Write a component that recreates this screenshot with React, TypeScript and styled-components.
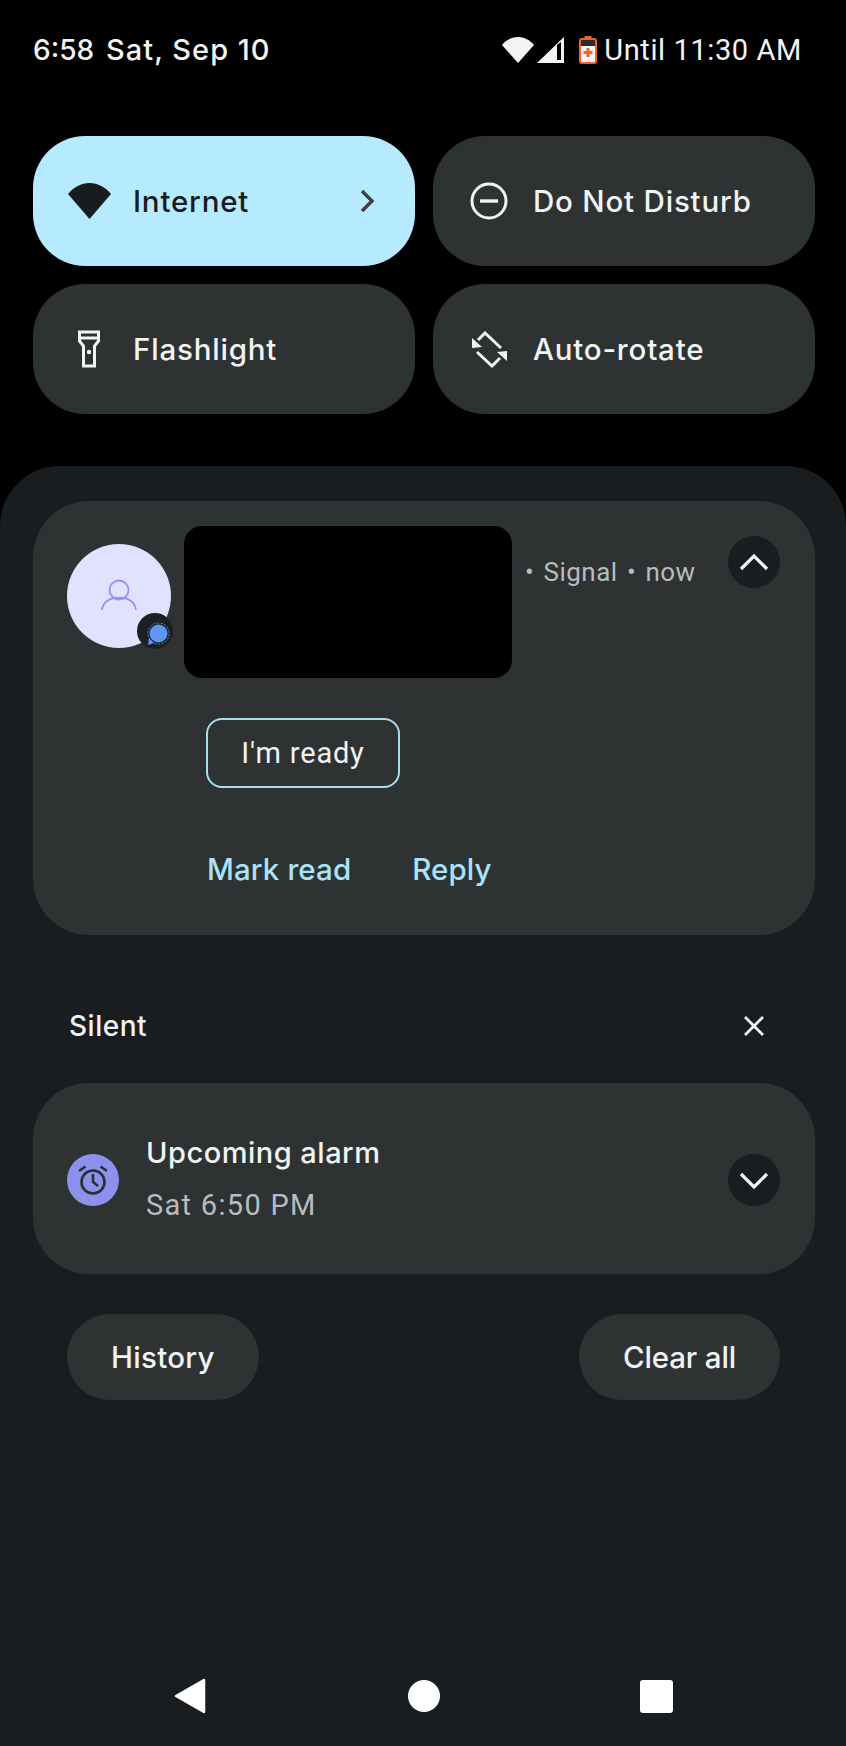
import React from "react";
import styled, { createGlobalStyle } from "styled-components";

const Global = createGlobalStyle`
  html, body { margin: 0; padding: 0; background: #000; }
  body { width: 846px; height: 1746px; overflow: hidden; font-family: Roboto, "Noto Sans", sans-serif; -webkit-font-smoothing: antialiased; }
  * { box-sizing: border-box; }
`;

const label = `font-family: Inter, Roboto, sans-serif; font-weight: 500;`;

const Screen = styled.div`
  width: 846px; height: 1746px; display: flex; flex-direction: column; background: #000; color: #f1f3f4;
`;
const StatusBar = styled.div`
  height: 100px; padding: 0 46px 0 33px; display: flex; align-items: center; justify-content: space-between;
  font-size: 29px; letter-spacing: 0.6px;
`;
const StatusLeft = styled.div`
  ${label} display: flex; gap: 12px; align-items: baseline; margin-top: -2px;
`;
const StatusTime = styled.span`font-size: 28px; letter-spacing: 0;`;
const StatusDate = styled.span`font-size: 29px; letter-spacing: 1px;`;
const StatusRight = styled.div`
  display: flex; align-items: center; font-weight: 400; margin-right: -2px;
`;
const StatusIcon = styled.svg<{ $gap?: number }>`
  display: block; margin-right: ${p => p.$gap ?? 0}px;
`;
const Tiles = styled.div`
  margin-top: 36px; padding: 0 31px 0 33px; display: grid; grid-template-columns: 382px 382px; grid-auto-rows: 130px; gap: 18px;
`;
const Tile = styled.div<{ $active?: boolean }>`
  ${label}
  border-radius: 52px; display: flex; align-items: center; padding: 0 40px 0 34px;
  background: ${p => (p.$active ? "#b6eaff" : "#2e3233")};
  color: ${p => (p.$active ? "#191c1e" : "#f1f3f4")};
  font-size: 29.5px; letter-spacing: 0.8px;
`;
const TileIcon = styled.div`
  width: 44px; height: 44px; margin-right: 22px; display: flex; align-items: center; justify-content: center; flex: none;
`;
const TileLabel = styled.span`flex: 1;`;
const Panel = styled.div`
  margin-top: 52px; flex: 1; background: #191d1f; border-radius: 60px 60px 0 0; padding: 35px 31px 0 33px; display: flex; flex-direction: column;
`;
const Card = styled.div`
  background: #2e3233; border-radius: 56px; height: 434px; padding: 25px 35px 0 34px; display: flex; flex-direction: column;
`;
const TopRow = styled.div`display: flex; align-items: flex-start;`;
const Avatar = styled.div`
  position: relative; width: 104px; height: 104px; border-radius: 50%; background: #e2e1ff; margin-top: 18px; flex: none;
  display: flex; align-items: center; justify-content: center;
`;
const Badge = styled.div`
  position: absolute; left: 70px; bottom: -1px; width: 36px; height: 36px; border-radius: 50%; background: #1c2022;
  display: flex; align-items: center; justify-content: center; padding: 6px 0 0 6px;
`;
const BadgeIcon = styled.svg`flex: none;`;
const Redacted = styled.div`
  width: 328px; height: 152px; background: #000; border-radius: 18px; margin-left: 13px; flex: none;
`;
const Meta = styled.div`
  margin: 30px 0 0 13px; flex: 1; font-size: 26px; color: #b9bcbe; letter-spacing: 0.45px; line-height: 32px; white-space: pre; word-spacing: 2.5px;
`;
const RoundButton = styled.div<{ $top?: number }>`
  width: 52px; height: 52px; border-radius: 50%; background: #191d1f; margin-top: ${p => p.$top ?? 0}px; flex: none;
  display: flex; align-items: center; justify-content: center;
`;
const SmartReply = styled.div`
  margin: 40px 0 0 139px; width: 194px; height: 70px; border: 2.5px solid #a8dded; border-radius: 16px;
  display: flex; align-items: center; justify-content: center; font-size: 29px; letter-spacing: 0.8px; color: #f1f3f4;
`;
const Actions = styled.div`
  ${label}
  margin: 58px 0 0 140px; display: flex; gap: 61px; font-size: 29.5px; letter-spacing: 0.1px; color: #a8e3f8; line-height: 46px;
`;
const SilentHeader = styled.div`
  ${label}
  height: 148px; padding: 34px 50px 0 36px; display: flex; align-items: center; justify-content: space-between;
  font-size: 28px; letter-spacing: 0.5px;
`;
const AlarmCard = styled.div`
  background: #2e3233; border-radius: 56px; height: 191px; padding: 0 35px 0 34px; display: flex; align-items: center;
`;
const AlarmIcon = styled.div`
  width: 52px; height: 52px; border-radius: 50%; background: #8b91ec; flex: none; margin-right: 27px; margin-top: 3px;
  display: flex; align-items: center; justify-content: center;
`;
const AlarmText = styled.div`flex: 1; display: flex; flex-direction: column;`;
const AlarmTitle = styled.div`${label} font-size: 29px; letter-spacing: 0.5px; line-height: 52px;`;
const AlarmSub = styled.div`font-size: 29px; color: #b9bcbe; line-height: 52px; letter-spacing: 1.3px;`;
const Footer = styled.div`
  margin-top: 40px; padding: 0 35px 0 34px; display: flex; justify-content: space-between;
`;
const Pill = styled.div<{ $tight?: boolean }>`
  ${label}
  height: 86px; padding: 0 44px; border-radius: 43px; background: #2e3233; display: flex; align-items: center;
  font-size: 29.5px; letter-spacing: ${p => (p.$tight ? "-0.15px" : "0.3px")};
`;
const NavBar = styled.div`
  margin-top: auto; height: 68px; margin-left: -33px; margin-right: -31px; padding-left: 174px; display: flex; align-items: flex-start;
`;
const NavSlot = styled.div<{ $w: number }>`width: ${p => p.$w}px; flex: none; display: flex;`;
const NavGlyph = styled.svg`margin-top: 2px;`;

export default function App() {
  return (
    <>
      <Global />
      <Screen>
        <StatusBar>
          <StatusLeft>
            <StatusTime>6:58</StatusTime>
            <StatusDate>Sat, Sep 10</StatusDate>
          </StatusLeft>
          <StatusRight>
            <StatusIcon width="32" height="26" viewBox="0 0 32 26" $gap={3}>
              <path d="M16 26 L0 8 C4 3 10 0 16 0 C22 0 28 3 32 8 Z" fill="#f1f3f4" />
            </StatusIcon>
            <StatusIcon width="27" height="26" viewBox="0 0 27 26" $gap={15}>
              <path d="M0 26 L27 0 V26 Z M20 8 V23 H24 V5 Z" fill="#f1f3f4" fillRule="evenodd" />
            </StatusIcon>
            <StatusIcon width="18" height="28" viewBox="0 0 18 28" $gap={7}>
              <rect x="5.5" y="0" width="7" height="3" fill="#f4622a" />
              <rect x="1" y="3" width="16" height="24" rx="2" fill="#f1f3f4" stroke="#f4622a" strokeWidth="2" />
              <rect x="2" y="4" width="14" height="6" fill="#2a2a2a" />
              <path d="M7.5 12 h3 v3 h3 v3 h-3 v3 h-3 v-3 h-3 v-3 h3 Z" fill="#f4622a" />
            </StatusIcon>
            <span>Until 11:30 AM</span>
          </StatusRight>
        </StatusBar>
        <Tiles>
          <Tile $active>
            <TileIcon>
              <svg width="43" height="36" viewBox="0 0 43 36">
                <path d="M21.5 36 L0 11 C6 4 13 0 21.5 0 C30 0 37 4 43 11 Z" fill="#191c1e" />
              </svg>
            </TileIcon>
            <TileLabel>Internet</TileLabel>
            <svg width="16" height="24" viewBox="0 0 16 24" fill="none">
              <path d="M3 2 L13 12 L3 22" stroke="#3c4042" strokeWidth="3.4" />
            </svg>
          </Tile>
          <Tile>
            <TileIcon>
              <svg width="38" height="38" viewBox="0 0 38 38" fill="none">
                <circle cx="19" cy="19" r="17" stroke="#f1f3f4" strokeWidth="3" />
                <path d="M10 19 H28" stroke="#f1f3f4" strokeWidth="3.4" />
              </svg>
            </TileIcon>
            <TileLabel>Do Not Disturb</TileLabel>
          </Tile>
          <Tile>
            <TileIcon>
              <svg width="22" height="38" viewBox="0 0 22 38" fill="none" stroke="#f1f3f4" strokeWidth="3">
                <path d="M1.5 2 H20.5 V11 L16.5 16 V36 H5.5 V16 L1.5 11 Z" />
                <path d="M1.5 8 H20.5" />
                <circle cx="11" cy="22" r="2.2" fill="#f1f3f4" stroke="none" />
              </svg>
            </TileIcon>
            <TileLabel>Flashlight</TileLabel>
          </Tile>
          <Tile>
            <TileIcon>
              <svg width="37" height="37" viewBox="0 0 37 37" fill="none">
                <path d="M7 9 L14 2 L30 17" stroke="#f1f3f4" strokeWidth="3" />
                <path d="M6 21 L21 35 L29 27" stroke="#f1f3f4" strokeWidth="3" />
                <path d="M1 7 L1 17 L11 16 Z" fill="#f1f3f4" />
                <path d="M36 20 L36 30 L26 21 Z" fill="#f1f3f4" />
              </svg>
            </TileIcon>
            <TileLabel>Auto-rotate</TileLabel>
          </Tile>
        </Tiles>
        <Panel>
          <Card>
            <TopRow>
              <Avatar>
                <svg width="36" height="34" viewBox="0 0 36 34" fill="none" stroke="#8f96f5" strokeWidth="1.8">
                  <circle cx="18" cy="11" r="9.5" />
                  <path d="M1 31 C2 23 9 19 14 19 H22 C27 19 34 23 35 31" />
                </svg>
                <Badge>
                  <BadgeIcon width="24" height="24" viewBox="0 0 24 24">
                    <circle cx="12.5" cy="11.5" r="9" fill="#5f96f4" />
                    <circle cx="12.5" cy="11.5" r="10.6" fill="none" stroke="#4a7bd0" strokeWidth="1" strokeDasharray="2.5 1.2" />
                    <path d="M2 23 L3 16 L8 21 Z" fill="#5f96f4" />
                  </BadgeIcon>
                </Badge>
              </Avatar>
              <Redacted />
              <Meta>{"• Signal • now"}</Meta>
              <RoundButton $top={10}>
                <svg width="32" height="20" viewBox="0 0 32 20" fill="none">
                  <path d="M3 17 L16 4 L29 17" stroke="#f1f3f4" strokeWidth="3.2" />
                </svg>
              </RoundButton>
            </TopRow>
            <SmartReply>I'm ready</SmartReply>
            <Actions>
              <span>Mark read</span>
              <span>Reply</span>
            </Actions>
          </Card>
          <SilentHeader>
            <span>Silent</span>
            <svg width="22" height="22" viewBox="0 0 22 22" fill="none">
              <path d="M2 2 L20 20 M20 2 L2 20" stroke="#f1f3f4" strokeWidth="2.8" />
            </svg>
          </SilentHeader>
          <AlarmCard>
            <AlarmIcon>
              <svg width="32" height="32" viewBox="0 0 32 32" fill="none" stroke="#2b2e33" strokeWidth="2.6">
                <circle cx="16" cy="18" r="11.5" />
                <path d="M16 10 V18 L21 22" />
                <path d="M2 7 L8.5 2.5 M30 7 L23.5 2.5" />
              </svg>
            </AlarmIcon>
            <AlarmText>
              <AlarmTitle>Upcoming alarm</AlarmTitle>
              <AlarmSub>Sat 6:50 PM</AlarmSub>
            </AlarmText>
            <RoundButton $top={3}>
              <svg width="32" height="20" viewBox="0 0 32 20" fill="none">
                <path d="M3 4 L16 17 L29 4" stroke="#f1f3f4" strokeWidth="3.2" />
              </svg>
            </RoundButton>
          </AlarmCard>
          <Footer>
            <Pill>History</Pill>
            <Pill $tight>Clear all</Pill>
          </Footer>
          <NavBar>
            <NavSlot $w={234}>
              <svg width="32" height="36" viewBox="0 0 32 36">
                <path d="M30 2 V34 L2 18 Z" fill="#fff" stroke="#fff" strokeWidth="2.5" strokeLinejoin="round" />
              </svg>
            </NavSlot>
            <NavSlot $w={232}>
              <NavGlyph width="32" height="32" viewBox="0 0 32 32">
                <circle cx="16" cy="16" r="16" fill="#fff" />
              </NavGlyph>
            </NavSlot>
            <NavSlot $w={33}>
              <NavGlyph width="33" height="33" viewBox="0 0 33 33">
                <rect width="33" height="33" rx="3" fill="#fff" />
              </NavGlyph>
            </NavSlot>
          </NavBar>
        </Panel>
      </Screen>
    </>
  );
}
